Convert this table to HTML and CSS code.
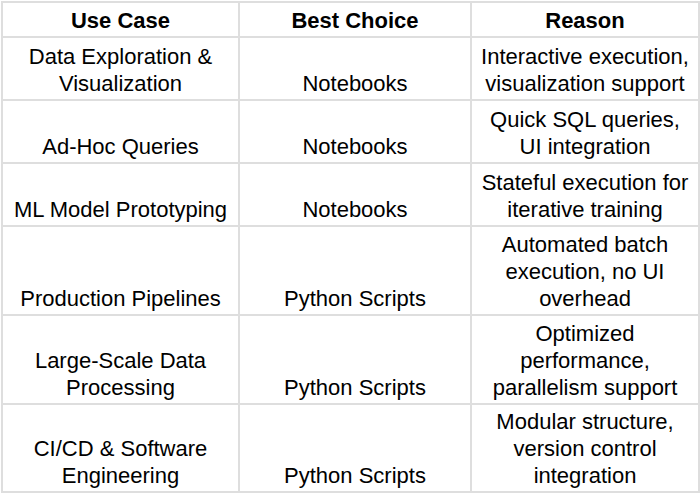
FILE: index.html
```html
<!DOCTYPE html>
<html>
<head>
<meta charset="utf-8">
<link rel="stylesheet" href="styles.css">
</head>
<body>
<table class="grid">
  <colgroup>
    <col class="c1"><col class="c2"><col class="c3">
  </colgroup>
  <thead>
    <tr class="r1"><th>Use Case</th><th>Best Choice</th><th>Reason</th></tr>
  </thead>
  <tbody>
    <tr class="r2"><td>Data Exploration &amp;<br>Visualization</td><td>Notebooks</td><td>Interactive execution,<br>visualization support</td></tr>
    <tr class="r2"><td>Ad-Hoc Queries</td><td>Notebooks</td><td>Quick SQL queries,<br>UI integration</td></tr>
    <tr class="r2"><td>ML Model Prototyping</td><td>Notebooks</td><td>Stateful execution for<br>iterative training</td></tr>
    <tr class="r3"><td>Production Pipelines</td><td>Python Scripts</td><td>Automated batch<br>execution, no UI<br>overhead</td></tr>
    <tr class="r3"><td>Large-Scale Data<br>Processing</td><td>Python Scripts</td><td>Optimized<br>performance,<br>parallelism support</td></tr>
    <tr class="r4"><td>CI/CD &amp; Software<br>Engineering</td><td>Python Scripts</td><td>Modular structure,<br>version control<br>integration</td></tr>
  </tbody>
</table>
</body>
</html>
```
FILE: styles.css
```css
html, body {
  margin: 0;
  padding: 0;
  background: #ffffff;
}
.grid {
  margin: 1px 0 0 1px;
  border-collapse: collapse;
  table-layout: fixed;
  width: 697px;
  font-family: "Liberation Sans", Arial, sans-serif;
  font-size: 22px;
  line-height: 27px;
  color: #000000;
}
.c1 { width: 237px; }
.c2 { width: 232px; }
.c3 { width: 228px; }
.grid th,
.grid td {
  border: 2px solid #dedede;
  padding: 3px 0 2px 0;
  text-align: center;
  vertical-align: bottom;
  white-space: nowrap;
}
.grid th {
  font-weight: bold;
}
.r1 { height: 35px; }
.r2 { height: 63px; }
.r3 { height: 89px; }
.r4 { height: 88px; }
```
